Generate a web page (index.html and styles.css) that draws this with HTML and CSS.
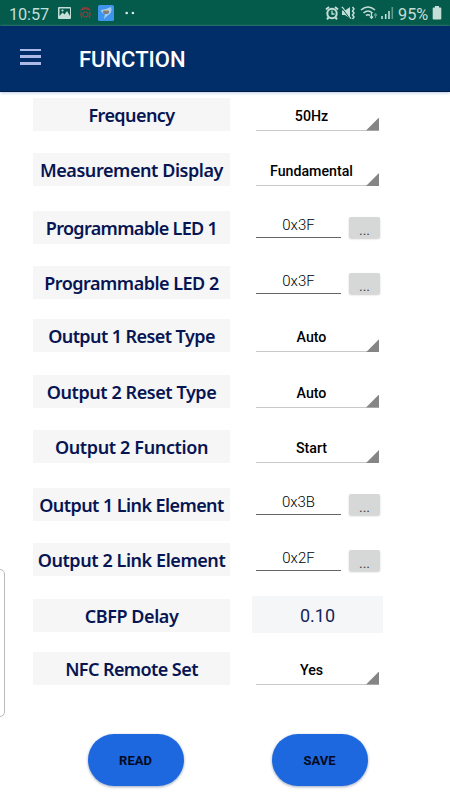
FILE: index.html
```html
<!DOCTYPE html>
<html lang="en">
<head>
<meta charset="utf-8">
<title>Function</title>
<link rel="stylesheet" href="styles.css">
</head>
<body>
<div class="status">
  <span class="time">10:57</span>
  <svg class="notes" width="90" height="26" viewBox="50 0 90 26">
    <path fill="#c4ded8" fill-rule="evenodd" d="M59 7h11q1 0 1 1v10q0 1-1 1H59q-1 0-1-1V8q0-1 1-1zm.5 1.500v7.500l3-3.500 2 2 2.500-3.500 3 5V8.500z"/>
    <circle cx="62.500" cy="10.500" r="1.100" fill="#c4ded8"/>
    <g fill="none" stroke="#b73538" stroke-width="1"><path d="M80.500 10q5-3 10 0M82 8.300q3.500-1 7 0M81.500 11.500q-1.500 3 .3 6.500M89.500 11.500q1.500 3-.3 6.500"/><circle cx="85.500" cy="14.500" r="2.600"/></g>
    <rect x="98" y="5" width="16" height="16" rx="1.500" fill="#3f94ec"/>
    <path d="M101 10l5-1 5-2q2 6-4 9l-3 3 1-5q-4-1-4-4z" fill="#a5ccf2"/>
    <ellipse cx="106" cy="12" rx="3" ry="2" fill="#777f80"/><path d="M103.500 10.500h5" stroke="#c8a678"/>
    <circle cx="126.700" cy="13" r="1.300" fill="#d6eae4"/><circle cx="132.900" cy="13" r="1.300" fill="#d6eae4"/>
  </svg>
  <svg class="signals" width="72" height="26" viewBox="324 0 72 26">
    <g fill="none" stroke="#c4ded8">
      <circle cx="332" cy="13.500" r="4.700" stroke-width="2"/><path stroke-width="1.300" d="M332 10.500v3.500h2.500"/><path stroke-width="2" d="M326 9.500l3-2.500M338 9.500l-3-2.500M328.500 17.500l-1.500 1.800M335.500 17.500l1.500 1.800"/>
      <path stroke-width="1.500" d="M342 7l9 12M352.500 7l1.500 2-1.500 2 1.500 2-1.500 2 1.500 2-1.500 2"/>
      <path stroke-width="1.600" d="M361 10q7-6 14 0M363.500 13q4.500-4 9 0M366 15.500q2-1.500 4 0"/>
      <path stroke-width="1.200" d="M371.500 13v5M370 16.500l1.500 1.800 1.500-1.800"/>
      <path stroke="#5f9b8d" stroke-width="1.200" d="M375.500 18v-4M374 15.500l1.500-1.800 1.500 1.800"/>
      <path stroke-width="1.600" d="M382 19v-3M385.700 19v-5M389 19V11"/><path stroke="#5f9b8d" stroke-width="1.600" d="M392.300 19V7"/>
    </g>
    <path fill="#c4ded8" d="M342 10.500h3l5-3.500v11.500l-5-3.500h-3z"/><path stroke="#045a4b" d="M342 8.200l9 12"/>
  </svg>
  <span class="pct">95%</span>
  <svg class="battery" width="10" height="14" viewBox="0 0 10 14"><path fill="#c4ded8" d="M3 0h4v1.500h1.500q.8 0 .8.800v10.400q0 .8-.8.800h-7q-.8 0-.8-.8V2.300q0-.8.8-.8H3z"/></svg>
</div>
<header class="bar">
  <div class="menu"><i></i><i></i><i></i></div>
  <h1>FUNCTION</h1>
</header>
<main>
  <div class="row"><div class="label tight">Frequency</div><div class="spinner">50Hz</div></div>
  <div class="row"><div class="label">Measurement Display</div><div class="spinner">Fundamental</div></div>
  <div class="row entry"><div class="label tighter">Programmable LED 1</div><div class="field">0x3F</div><button class="more">...</button></div>
  <div class="row entry"><div class="label snug">Programmable LED 2</div><div class="field">0x3F</div><button class="more">...</button></div>
  <div class="row"><div class="label tight">Output 1 Reset Type</div><div class="spinner">Auto</div></div>
  <div class="row"><div class="label">Output 2 Reset Type</div><div class="spinner">Auto</div></div>
  <div class="row"><div class="label loose">Output 2 Function</div><div class="spinner">Start</div></div>
  <div class="row entry"><div class="label tight">Output 1 Link Element</div><div class="field">0x3B</div><button class="more">...</button></div>
  <div class="row entry"><div class="label">Output 2 Link Element</div><div class="field">0x2F</div><button class="more">...</button></div>
  <div class="row entry"><div class="label">CBFP Delay</div><div class="value">0.10</div></div>
  <div class="row"><div class="label tight">NFC Remote Set</div><div class="spinner">Yes</div></div>
</main>
<footer><button class="action">READ</button><button class="action">SAVE</button></footer>
<div class="edge"></div>
</body>
</html>
```
FILE: styles.css
```css
* { box-sizing: border-box; }
body { margin: 0; width: 450px; height: 800px; overflow: hidden; background: #fff; font-family: Roboto, sans-serif; position: relative; }
.status { height: 26px; background: #045a4b; display: flex; align-items: center; color: #c4ded8; font-size: 16.300px; padding-left: 9px; }
.time { width: 41px; letter-spacing: -.1px; padding-top: 2px; }
.notes { margin-right: 184px; flex: none; }
.signals { flex: none; }
.pct { width: 35px; margin-left: 2px; padding-top: 2px; flex: none; }
.battery { flex: none; margin-left: -1px; }
.bar { height: 66px; background: #012d68; border-bottom: 1px solid #021d45; box-shadow: 0 1px 3px #b9cbe3; display: flex; align-items: center; padding-left: 20px; }
.menu { width: 21px; height: 16px; display: flex; flex-direction: column; justify-content: space-between; margin-top: -4px; }
.menu i { height: 2.600px; background: #adb9e6; }
h1 { margin: 3px 0 0 38px; color: #fff; font-size: 22px; line-height: 26px; font-weight: 500; }
main { padding: 5.600px 0 0 33px; height: 635px; }
.row { height: 55.400px; display: flex; align-items: flex-start; }
.label { width: 197px; height: 33px; padding-top: 1px; background: #f6f6f7; text-align: center; color: #071552; font: 600 18px/33px "Noto Sans", sans-serif; letter-spacing: -.43px; white-space: nowrap; flex: none; }
.label.loose { letter-spacing: -.36px; }
.label.snug { letter-spacing: -.5px; }
.label.tight { letter-spacing: -.58px; }
.label.tighter { letter-spacing: -.67px; }
.entry .label { margin-top: 2.600px; }
.spinner { width: 123px; height: 33px; margin-left: 26px; border-bottom: 1px solid #c9c9c9; position: relative; text-align: center; color: #000; font-size: 14.200px; line-height: 37px; font-weight: 500; padding-right: 12px; }
.spinner::after { content: ""; position: absolute; right: 0; bottom: -1px; width: 13px; height: 13px; background: #858585; clip-path: polygon(100% 0, 100% 100%, 0 100%); }
.field { width: 85px; height: 30px; margin-left: 26px; border-bottom: 1px solid #666; text-align: center; font-size: 15px; line-height: 34px; font-weight: 300; color: #000; }
.more { width: 31px; height: 21px; margin: 9px 0 0 8px; padding: 0; border: 0; border-radius: 2px; background: #d6d8d7; box-shadow: 0 1px 2px #ccc; font: 14px/27px Roboto, sans-serif; color: #444; overflow: hidden; }
.value { width: 131px; height: 37px; margin-left: 22px; background: #f5f6f8; color: #172557; font-size: 18px; line-height: 39px; text-align: center; }
footer { display: flex; gap: 88px; padding: 7px 0 0 87.500px; }
.action { width: 96px; height: 52px; padding: 0; border: 0; border-radius: 26px; background: #1d68df; box-shadow: 0 1px 3px #9aa8bd; color: #020a22; font: 700 13px Roboto, sans-serif; }
.edge { position: absolute; left: -6px; top: 569px; width: 11px; height: 148px; border: 1px solid #bbb; border-radius: 5px; background: #fff; }
```
